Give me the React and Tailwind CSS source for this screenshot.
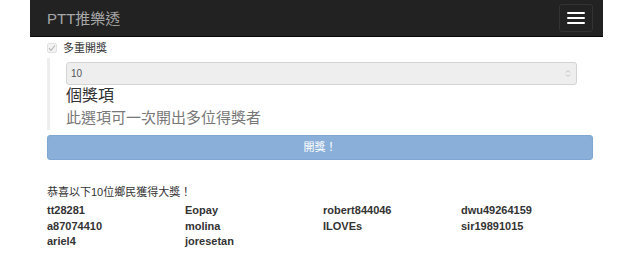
export default function App() {
  const names = [
    "tt28281", "Eopay", "robert844046", "dwu49264159",
    "a87074410", "molina", "ILOVEs", "sir19891015",
    "ariel4", "joresetan",
  ];
  return (
    <div className="w-[640px] h-[262px] bg-white overflow-hidden font-['Liberation_Sans','Noto_Sans_CJK_TC',sans-serif] text-[#333]">
      <nav className="ml-[30px] w-[573px] h-[37px] bg-[#222] border-b border-[#080808] flex items-center justify-between pl-[17px] pr-[10px]">
        <span className="text-[15px] text-[#a8a8a8] leading-none">PTT推樂透</span>
        <div className="w-[34px] h-[28px] border border-[#333] rounded-[3px] flex flex-col items-center justify-center gap-[3px]">
          <span className="block w-[18px] h-[2px] bg-white rounded-[1px]" />
          <span className="block w-[18px] h-[2px] bg-white rounded-[1px]" />
          <span className="block w-[18px] h-[2px] bg-white rounded-[1px]" />
        </div>
      </nav>
      <div className="pl-[47px]">
        <div className="mt-[6px] flex items-center h-[10px]">
          <span className="w-[10px] h-[10px] rounded-[2px] bg-[#f3f3f3] border border-[#e2e2e2] flex items-center justify-center">
            <svg width="8" height="8" viewBox="0 0 8 8">
              <path d="M1 4.2 L3 6.3 L7 1.5" fill="none" stroke="#b5b5b5" strokeWidth="1.1" />
            </svg>
          </span>
          <span className="ml-[6px] text-[11px] leading-none">多重開獎</span>
        </div>
        <div className="mt-[5px] border-l-[3px] border-[#eee] pl-[16px] pt-[4px] pb-[2px] w-[530px]">
          <div className="w-[511px] h-[23px] bg-[#eee] border border-[#d4d4d4] rounded-[3px] flex items-center justify-between pl-[4px] pr-[5px]">
            <span className="text-[10px] text-[#555]">10</span>
            <svg width="6" height="9" viewBox="0 0 6 9">
              <path d="M1 3.5 L3 1.5 L5 3.5 M1 5.5 L3 7.5 L5 5.5" fill="none" stroke="#bbb" strokeWidth="0.9" />
            </svg>
          </div>
          <div className="text-[16px] leading-[20px] mt-[1px] text-[#333]">個獎項</div>
          <div className="text-[15px] leading-[20px] mt-[2px] text-[#777]">此選項可一次開出多位得獎者</div>
        </div>
        <div className="mt-[5px] w-[546px] h-[25px] rounded-[3px] bg-[#8aafd9] border border-[#7fa6d2] flex items-center justify-center text-white text-[11px]">
          開獎！
        </div>
        <div className="mt-[24px] text-[11px] leading-[16px]">恭喜以下10位鄉民獲得大獎！</div>
        <div className="mt-[3px] grid grid-cols-[138px_138px_138px_138px] text-[11px] leading-[15.5px] font-bold text-[#333]">
          {names.map((n) => (
            <div key={n}>{n}</div>
          ))}
        </div>
      </div>
    </div>
  );
}
